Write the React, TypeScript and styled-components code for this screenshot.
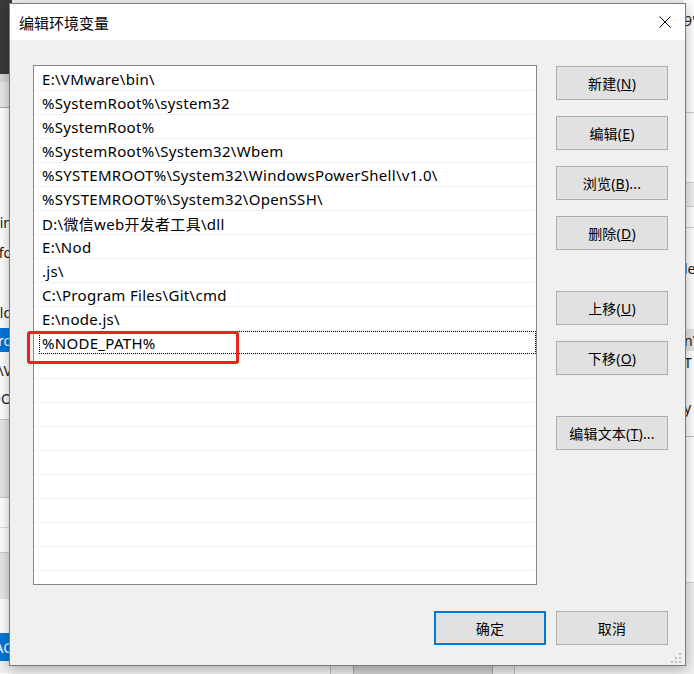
import React from 'react';
import styled, { createGlobalStyle } from 'styled-components';

const Global = createGlobalStyle`
  html, body { margin: 0; padding: 0; }
  body {
    width: 694px; height: 674px; overflow: hidden; background: #f0f0f0;
    font-family: "Noto Sans", "Noto Sans CJK SC", sans-serif;
  }
`;

const FONT = `"Noto Sans", "Noto Sans CJK SC", sans-serif`;

const Desktop = styled.div`
  position: relative;
  width: 694px;
  height: 674px;
  overflow: hidden;
  background: #f0f0f0;
  font-family: ${FONT};
`;

/* ---------- background windows (partly hidden behind the dialog) ---------- */
const BackWindow = styled.div<{ $left: number; $width: number }>`
  position: absolute;
  top: 0;
  left: ${p => p.$left}px;
  width: ${p => p.$width}px;
  height: 674px;
  display: flex;
  flex-direction: column;
  background: #fff;
  font-size: 14px;
`;

const Band = styled.div<{ $h: number; $bg?: string; $line?: string; $color?: string; $end?: boolean }>`
  flex-shrink: 0;
  height: ${p => p.$h}px;
  box-sizing: border-box;
  background: ${p => p.$bg || '#fff'};
  border-bottom: ${p => (p.$line ? `1px solid ${p.$line}` : 'none')};
  color: ${p => p.$color || '#1a1a1a'};
  display: flex;
  align-items: center;
  justify-content: ${p => (p.$end ? 'flex-end' : 'flex-start')};
  white-space: nowrap;
  overflow: hidden;
`;

const BottomWindow = styled.div`
  position: absolute;
  left: 330px;
  top: 640px;
  width: 185px;
  height: 40px;
  box-sizing: border-box;
  background: #e8e8e8;
  border: 1px solid #b8b8b8;
  display: flex;
  justify-content: center;
  padding-top: 20px;
`;

const BottomInner = styled.div`
  width: 138px;
  height: 20px;
  background: #cfcfcf;
  border: 1px solid #a8a8a8;
`;

/* ---------- dialog ---------- */
const Dialog = styled.div`
  position: absolute;
  left: 9px;
  top: 3px;
  width: 677px;
  height: 663px;
  box-sizing: border-box;
  border: 1px solid #7b7b7b;
  background: #f0f0f0;
  box-shadow: 0 3px 12px rgba(0, 0, 0, 0.3);
  display: flex;
  flex-direction: column;
`;

const TitleBar = styled.div`
  height: 36px;
  flex-shrink: 0;
  background: #fff;
  display: flex;
  align-items: center;
`;

const Title = styled.div`
  flex: 1;
  padding-left: 9px;
  font-size: 15px;
  color: #000;
`;

const CloseButton = styled.div`
  width: 40px;
  height: 36px;
  display: flex;
  align-items: center;
  justify-content: center;
`;

const Body = styled.div`
  flex: 1;
  display: flex;
  flex-direction: column;
  padding: 25px 17px 20px 23px;
`;

const Main = styled.div`
  display: flex;
  gap: 19px;
`;

const ListBox = styled.div`
  width: 504px;
  height: 520px;
  box-sizing: border-box;
  border: 1px solid #828790;
  background: #fff;
  padding-top: 1px;
  overflow: hidden;
`;

const Row = styled.div`
  height: 24px;
  box-sizing: border-box;
  margin: 0 1px;
  border-bottom: 1px solid #f0f0f0;
  display: flex;
`;

const Cell = styled.div<{ $focused?: boolean }>`
  flex: 1;
  margin-left: 4px;
  margin-right: ${p => (p.$focused ? '-1px' : '0')};
  padding-left: 2px;
  padding-top: 1px;
  box-sizing: border-box;
  display: flex;
  align-items: center;
  font-size: 15px;
  letter-spacing: 0.3px;
  color: #000;
  white-space: nowrap;
  border: 1px dotted ${p => (p.$focused ? '#000' : 'transparent')};
`;

const SideButtons = styled.div`
  display: flex;
  flex-direction: column;
`;

const Button = styled.div<{ $default?: boolean; $top?: number }>`
  width: 112px;
  height: 34px;
  box-sizing: border-box;
  margin-top: ${p => p.$top || 0}px;
  background: #e1e1e1;
  border: ${p => (p.$default ? '2px solid #0078d7' : '1px solid #adadad')};
  display: flex;
  align-items: center;
  justify-content: center;
  font-size: 14px;
  letter-spacing: 0.2px;
  color: #000;
  white-space: nowrap;
`;

const Footer = styled.div`
  margin-top: 26px;
  display: flex;
  justify-content: flex-end;
  gap: 10px;
`;

const Grip = styled.svg`
  position: absolute;
  right: 4px;
  bottom: 2px;
`;

const Annotation = styled.div`
  position: absolute;
  left: 27px;
  top: 331px;
  width: 212px;
  height: 33px;
  box-sizing: border-box;
  border: 3px solid #e8221c;
  border-radius: 3px;
`;

const items = [
  'E:\\VMware\\bin\\',
  '%SystemRoot%\\system32',
  '%SystemRoot%',
  '%SystemRoot%\\System32\\Wbem',
  '%SYSTEMROOT%\\System32\\WindowsPowerShell\\v1.0\\',
  '%SYSTEMROOT%\\System32\\OpenSSH\\',
  'D:\\微信web开发者工具\\dll',
  'E:\\Nod',
  '.js\\',
  'C:\\Program Files\\Git\\cmd',
  'E:\\node.js\\',
  '%NODE_PATH%',
];

const rows = [...items, ...Array(10).fill('')];

type B = { h: number; bg?: string; line?: string; color?: string; text?: string };

const leftBands: B[] = [
  { h: 74, bg: '#3a3a3a' },
  { h: 8, bg: '#d6d6d6' },
  { h: 26, bg: '#e8e8e8', line: '#a8a8a8' },
  { h: 99 },
  { h: 30, text: 'Domain' },
  { h: 30, text: 'Info' },
  { h: 30 },
  { h: 31, text: 'Fold' },
  { h: 24, bg: '#0078d7', color: '#fff', text: 'Dirro' },
  { h: 36, text: 'E:\\V' },
  { h: 20, text: 'LOO' },
  { h: 12, line: '#c8c8c8', text: '' },
  { h: 78, bg: '#e6e6e6', line: '#c8c8c8' },
  { h: 30, line: '#dcdcdc' },
  { h: 25, line: '#c8c8c8' },
  { h: 46, bg: '#e6e6e6' },
  { h: 34 },
  { h: 28, bg: '#0078d7', color: '#fff', text: 'AC' },
  { h: 12, bg: '#f0f0f0' },
];

const rightBands: B[] = [
  { h: 40, text: "9'" },
  { h: 73, line: '#cfcfcf' },
  { h: 70, line: '#cfcfcf' },
  { h: 24, bg: '#f0f0f0', line: '#cfcfcf' },
  { h: 21, line: '#cfcfcf' },
  { h: 28 },
  { h: 24, text: 'le' },
  { h: 49 },
  { h: 22, bg: '#e5e5e5', text: 'n\\' },
  { h: 22, text: 'T' },
  { h: 22 },
  { h: 24, text: 'y 2' },
  { h: 18, line: '#bdbdbd' },
  { h: 146, line: '#cfcfcf' },
  { h: 92, bg: '#f0f0f0' },
];

const Mn: React.FC<{ label: string; k: string; tail?: string }> = ({ label, k, tail }) => (
  <span>
    {label}(<u>{k}</u>){tail}
  </span>
);

export default function App() {
  return (
    <>
      <Global />
      <Desktop>
        <BackWindow $left={-150} $width={162}>
          {leftBands.map((b, i) => (
            <Band key={i} $h={b.h} $bg={b.bg} $line={b.line} $color={b.color} $end>
              {b.text}
            </Band>
          ))}
        </BackWindow>
        <BackWindow $left={684} $width={60}>
          {rightBands.map((b, i) => (
            <Band key={i} $h={b.h} $bg={b.bg} $line={b.line} $color={b.color}>
              {b.text}
            </Band>
          ))}
        </BackWindow>
        <BottomWindow>
          <BottomInner />
        </BottomWindow>

        <Dialog>
          <TitleBar>
            <Title>编辑环境变量</Title>
            <CloseButton>
              <svg width="12" height="12" viewBox="0 0 12 12">
                <path d="M0.5 0.5 L11.5 11.5 M11.5 0.5 L0.5 11.5" stroke="#000" strokeWidth="1" fill="none" />
              </svg>
            </CloseButton>
          </TitleBar>
          <Body>
            <Main>
              <ListBox>
                {rows.map((t, i) => (
                  <Row key={i}>
                    <Cell $focused={i === 11}>{t}</Cell>
                  </Row>
                ))}
              </ListBox>
              <SideButtons>
                <Button $top={1}><Mn label="新建" k="N" /></Button>
                <Button $top={16}><Mn label="编辑" k="E" /></Button>
                <Button $top={16}><Mn label="浏览" k="B" tail="..." /></Button>
                <Button $top={16}><Mn label="删除" k="D" /></Button>
                <Button $top={41}><Mn label="上移" k="U" /></Button>
                <Button $top={16}><Mn label="下移" k="O" /></Button>
                <Button $top={41}><Mn label="编辑文本" k="T" tail="..." /></Button>
              </SideButtons>
            </Main>
            <Footer>
              <Button $default>确定</Button>
              <Button>取消</Button>
            </Footer>
          </Body>
          <Grip width="10" height="10" viewBox="0 0 10 10">
            <g fill="#bdbdbd">
              <rect x="8" y="0" width="2" height="2" />
              <rect x="4" y="4" width="2" height="2" />
              <rect x="8" y="4" width="2" height="2" />
              <rect x="0" y="8" width="2" height="2" />
              <rect x="4" y="8" width="2" height="2" />
              <rect x="8" y="8" width="2" height="2" />
            </g>
          </Grip>
        </Dialog>
        <Annotation />
      </Desktop>
    </>
  );
}
